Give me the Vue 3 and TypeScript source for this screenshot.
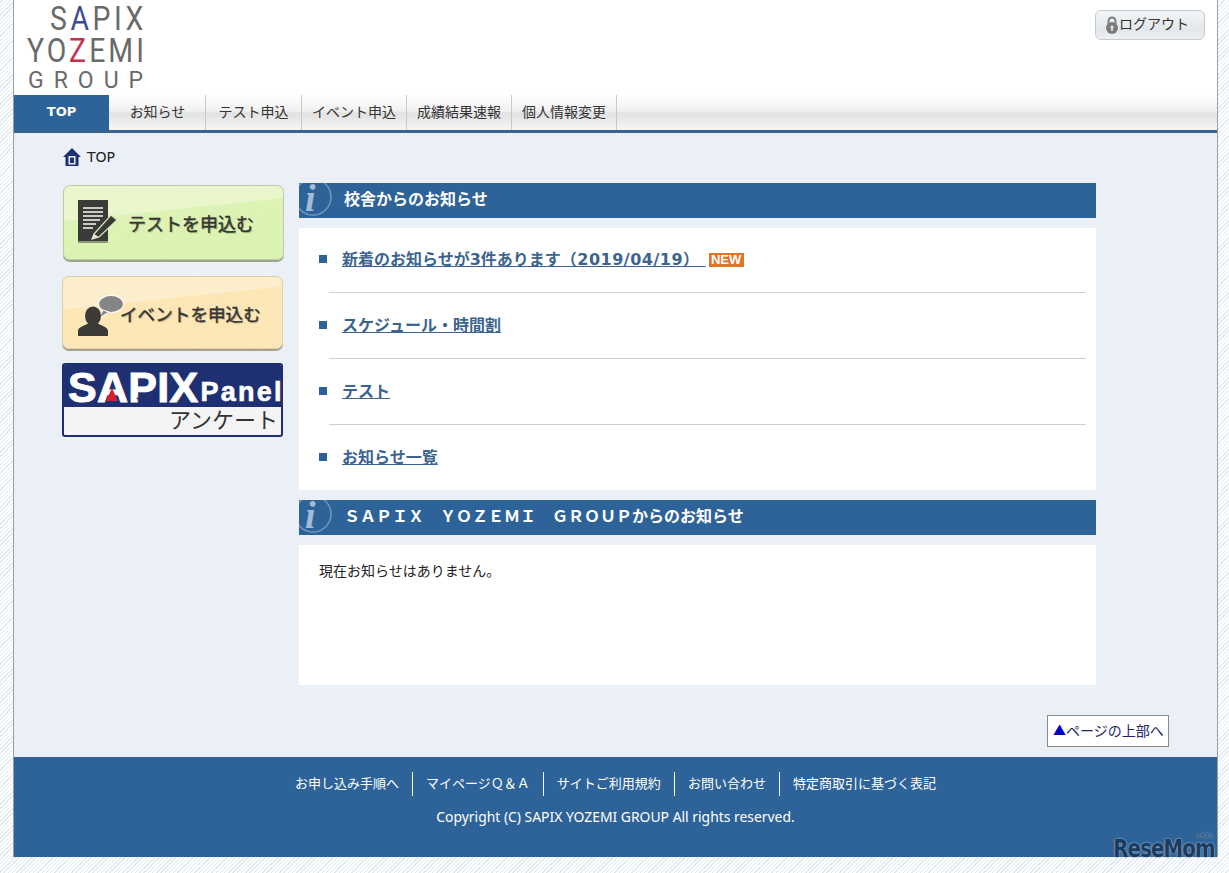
<script setup lang="ts">
const tabs: string[] = ['お知らせ', 'テスト申込', 'イベント申込', '成績結果速報', '個人情報変更']
const notices: { label: string; date?: string; isNew?: boolean }[] = [
  { label: '新着のお知らせが3件あります', date: '\uFF082019/04/19\uFF09 ', isNew: true },
  { label: 'スケジュール・時間割' },
  { label: 'テスト' },
  { label: 'お知らせ一覧' },
]
const footerLinks: string[] = ['お申し込み手順へ', 'マイページ\uFF31\uFF06\uFF21', 'サイトご利用規約', 'お問い合わせ', '特定商取引に基づく表記']
const groupTitle: string = '\uFF33\uFF21\uFF30\uFF29\uFF38\u3000\uFF39\uFF2F\uFF3A\uFF25\uFF2D\uFF29\u3000\uFF27\uFF32\uFF2F\uFF35\uFF30からのお知らせ'
</script>

<template>
  <div class="page">
    <header class="head">
      <div class="logo">
        <div class="l1">S<span class="blue">A</span>PIX</div>
        <div class="l2">YO<span class="red">Z</span>EMI</div>
        <div class="l3">GROUP</div>
      </div>
      <a class="logout">
        <svg width="14" height="18" viewBox="0 0 14 18">
          <path d="M3.5 8V5a3.5 3.5 0 0 1 7 0v3" fill="none" stroke="#7d7d7d" stroke-width="2" />
          <circle cx="7" cy="12" r="6" fill="#7d7d7d" />
          <circle cx="7" cy="11" r="1.5" fill="#e8ecef" />
          <rect x="6.2" y="11" width="1.6" height="4" fill="#e8ecef" />
        </svg>
        <span>ログアウト</span>
      </a>
    </header>

    <nav class="nav">
      <a class="tab-top">TOP</a>
      <a v-for="t in tabs" :key="t" class="tab">{{ t }}</a>
    </nav>

    <main class="content">
      <div class="crumb">
        <svg width="18" height="20" viewBox="0 0 18 20">
          <path d="M9 1 L18 10 H15.5 V19 H2.5 V10 H0 Z" fill="#1d3272" />
          <rect x="5.5" y="9" width="7" height="8.5" fill="#e9eef6" />
          <rect x="7" y="10.5" width="4" height="5.5" fill="#1d3272" />
        </svg>
        <span>TOP</span>
      </div>

      <div class="columns">
        <aside class="side">
          <a class="btn btn-green">
            <svg class="btn-icon" width="42" height="44" viewBox="0 0 42 44">
              <rect x="0" y="0" width="30" height="41" fill="#3a3a38" />
              <rect x="0" y="41" width="30" height="2" fill="#8a9a78" />
              <path d="M5 8H25M5 12H25M5 16H25M5 20H22M5 24H18M5 28H15" stroke="#c9c9c4" stroke-width="2" />
              <path d="M16 34 L33 15 L39 20 L21 37 L14 39 Z" fill="#3a3a38" stroke="#d9eab8" stroke-width="1.2" />
              <path d="M16 34 L14 39 L21 37 Z" fill="#e4e4dc" />
            </svg>
            <span class="btn-text">テストを申込む</span>
          </a>

          <a class="btn btn-orange">
            <svg class="btn-icon-2" width="46" height="42" viewBox="0 0 46 42">
              <ellipse cx="33" cy="9" rx="12.5" ry="8.5" fill="#858585" stroke="#fff" stroke-width="1.2" />
              <path d="M25 15 L21 23 L31 17 Z" fill="#858585" stroke="#fff" stroke-width="1" />
              <ellipse cx="15" cy="21" rx="8" ry="9.5" fill="#3b3a37" />
              <path d="M0 41 V36 C0 32 6 31 11 28 H19 C24 31 30 32 30 36 V41 Z" fill="#3b3a37" />
            </svg>
            <span class="btn-text narrow">イベントを申込む</span>
          </a>

          <a class="panel-banner">
            <div class="banner-top">
              <span class="sapix">SAPIX</span>
              <span class="panel-word">Panel</span>
              <i class="tri"></i>
              <span class="kana">サピックス</span>
            </div>
            <div class="banner-bottom">アンケート</div>
          </a>
        </aside>

        <section class="main">
          <h2 class="bar">
            <svg class="info" width="34" height="35" viewBox="0 0 34 35">
              <circle cx="14" cy="14" r="18" fill="none" stroke="#6f95bb" stroke-width="1.6" />
              <text x="6" y="28" class="info-i">i</text>
            </svg>
            <span>校舎からのお知らせ</span>
          </h2>
          <ul class="list">
            <li v-for="n in notices" :key="n.label" class="row">
              <i class="sq"></i>
              <a class="link">{{ n.label }}<span v-if="n.date" class="date">{{ n.date }}</span></a>
              <span v-if="n.isNew" class="new">NEW</span>
            </li>
          </ul>

          <h2 class="bar">
            <svg class="info" width="34" height="35" viewBox="0 0 34 35">
              <circle cx="14" cy="14" r="18" fill="none" stroke="#6f95bb" stroke-width="1.6" />
              <text x="6" y="28" class="info-i">i</text>
            </svg>
            <span>{{ groupTitle }}</span>
          </h2>
          <div class="empty">現在お知らせはありません。</div>
        </section>
      </div>

      <div class="to-top-wrap">
        <a class="to-top"><span class="tri-up">▲</span>ページの上部へ</a>
      </div>
    </main>

    <footer class="foot">
      <div class="foot-links">
        <a v-for="f in footerLinks" :key="f" class="foot-link">{{ f }}</a>
      </div>
      <p class="copy">Copyright (C) SAPIX YOZEMI GROUP All rights reserved.</p>
    </footer>

    <div class="mark"><span class="mark-kana">リセマム</span>ReseMom</div>
  </div>
</template>

<style>
html,
body {
  margin: 0;
  min-height: 100%;
  background: repeating-linear-gradient(-45deg, #ffffff 0 2px, #dfe9f2 2px 3px);
}
</style>

<style scoped>
.page {
  position: relative;
  box-sizing: border-box;
  width: 1205px;
  margin-left: 13px;
  margin-bottom: 16px;
  border-left: 1px solid #9a9fa6;
  border-right: 1px solid #9a9fa6;
  background: #fff;
  font-family: "DejaVu Sans", "Noto Sans CJK JP", sans-serif;
  color: #222;
}
.head {
  height: 95px;
  display: flex;
  justify-content: space-between;
  align-items: flex-start;
  padding-left: 13px;
  padding-right: 12px;
}
.logo {
  width: 120px;
  padding-top: 2px;
  font-family: "Roboto", "Liberation Sans", sans-serif;
  font-weight: 400;
  color: #6a6a6a;
  white-space: nowrap;
}
.l1 {
  font-size: 33px;
  line-height: 33px;
  letter-spacing: 4.2px;
  text-align: right;
  transform: scaleX(0.86);
  transform-origin: right center;
}
.l2 {
  font-size: 33px;
  line-height: 32px;
  letter-spacing: 3.6px;
  transform: scaleX(0.86);
  transform-origin: left center;
}
.l3 {
  font-size: 23px;
  line-height: 24px;
  letter-spacing: 10px;
  margin-top: 2px;
  margin-left: 1px;
}
.blue {
  color: #3b4d94;
}
.red {
  color: #c2334f;
}
.logout {
  box-sizing: border-box;
  width: 110px;
  height: 30px;
  margin-top: 10px;
  padding-left: 9px;
  padding-bottom: 1px;
  display: flex;
  align-items: center;
  gap: 0;
  border: 1px solid #c5cbd0;
  border-radius: 6px;
  background: linear-gradient(#f3f5f6, #e2e7eb 70%, #eef0f2);
  font-size: 14px;
  color: #333;
}
.logout span {
  margin-top: -4px;
}
.nav {
  height: 35px;
  display: flex;
  border-bottom: 3px solid #36638f;
  background: linear-gradient(#ffffff, #f0f0f0 46%, #e1e1e1 52%, #f6f6f6 100%);
}
.tab-top {
  width: 95px;
  margin-right: 1px;
  box-sizing: border-box;
  padding-bottom: 2px;
  display: flex;
  align-items: center;
  justify-content: center;
  background: #2e6399;
  color: #fff;
  font-weight: 700;
  font-size: 13px;
}
.tab {
  box-sizing: border-box;
  min-width: 96px;
  padding: 0 10px 4px;
  display: flex;
  align-items: center;
  justify-content: center;
  border-right: 1px solid #c9c9c9;
  font-size: 14px;
  color: #333;
  white-space: nowrap;
}
.content {
  background: #ebeff6;
  height: 624px;
  box-sizing: border-box;
  overflow: hidden;
}
.crumb {
  height: 50px;
  display: flex;
  align-items: center;
  gap: 6px;
  padding-left: 49px;
  font-size: 14px;
  color: #222;
  box-sizing: border-box;
  padding-bottom: 2px;
}
.columns {
  display: flex;
  gap: 15px;
  padding-left: 48px;
}
.side {
  width: 222px;
  flex: none;
  display: flex;
  flex-direction: column;
  padding-top: 2px;
}
.btn {
  box-sizing: border-box;
  width: 221px;
  height: 75px;
  display: flex;
  align-items: center;
  border-radius: 7px;
  position: relative;
  overflow: hidden;
}
.btn-green {
  margin-left: 1px;
  padding-left: 14px;
  gap: 8px;
  border: 1px solid #bccba6;
  box-shadow: 0 2px 0 #9aa58b;
  background:
    repeating-linear-gradient(-45deg, rgba(255, 255, 255, 0.14) 0 1px, rgba(255, 255, 255, 0) 1px 3px),
    linear-gradient(174deg, #e8f6c9 0 36%, #dbf2b2 37%, #d9f2ae 100%);
}
.btn-orange {
  height: 73px;
  margin-top: 16px;
  padding-left: 15px;
  gap: 0;
  border: 1px solid #dccfa9;
  box-shadow: 0 2px 0 #a9a18c;
  background:
    repeating-linear-gradient(-45deg, rgba(255, 255, 255, 0.14) 0 1px, rgba(255, 255, 255, 0) 1px 3px),
    linear-gradient(174deg, #fdeecb 0 34%, #fde5b3 35%, #fee6b4 100%);
}
.btn-icon {
  flex: none;
  margin-top: -2px;
}
.btn-icon-2 {
  flex: none;
  margin-top: 6px;
  margin-right: -4px;
}
.btn-text {
  font-family: "Noto Sans CJK JP", sans-serif;
  font-size: 18px;
  font-weight: 400;
  color: #333;
  -webkit-text-stroke: 0.4px #333;
  text-shadow: 1px 1px 1px rgba(70, 80, 40, 0.4);
  white-space: nowrap;
}
.narrow {
  font-size: 17.6px;
  margin-top: 2px;
}
.panel-banner {
  box-sizing: border-box;
  display: block;
  margin-top: 14px;
  width: 221px;
  height: 74px;
  border: 2px solid #1e2f72;
  border-radius: 3px;
  background: #f4f4f4;
  overflow: hidden;
}
.banner-top {
  position: relative;
  height: 42px;
  background: #1e2f72;
  color: #fff;
  font-family: "Liberation Sans", sans-serif;
  font-weight: 700;
  white-space: nowrap;
  display: flex;
  align-items: flex-end;
  padding-left: 4px;
}
.sapix {
  font-size: 43px;
  line-height: 39px;
  letter-spacing: 0.3px;
  -webkit-text-stroke: 1px #fff;
}
.panel-word {
  font-size: 27px;
  line-height: 29px;
  letter-spacing: 2.2px;
  margin-left: 2px;
  -webkit-text-stroke: 0.6px #fff;
}
.tri {
  position: absolute;
  left: 42px;
  bottom: 6px;
  width: 0;
  height: 0;
  border-left: 6px solid transparent;
  border-right: 6px solid transparent;
  border-bottom: 13px solid #d8212f;
}
.kana {
  position: absolute;
  left: 72px;
  bottom: 5px;
  font-size: 5px;
  line-height: 6px;
  letter-spacing: -1px;
  font-family: "Noto Sans CJK JP", sans-serif;
  color: #1e2f72;
}
.banner-bottom {
  height: 28px;
  line-height: 23px;
  text-align: right;
  padding-right: 3px;
  font-family: "Noto Sans CJK JP", sans-serif;
  font-size: 22px;
  font-weight: 400;
  color: #333;
}
.main {
  width: 797px;
  flex: none;
}
.bar {
  position: relative;
  box-sizing: border-box;
  height: 35px;
  margin: 0;
  padding-left: 45px;
  padding-bottom: 5px;
  display: flex;
  align-items: center;
  background: #2e6399;
  color: #fff;
  font-size: 16px;
  font-weight: 700;
  font-family: "Noto Sans CJK JP", sans-serif;
  white-space: nowrap;
  overflow: hidden;
}
.info {
  position: absolute;
  left: 0;
  top: 0;
}
.info-i {
  font-family: "Liberation Serif", serif;
  font-style: italic;
  font-weight: 700;
  font-size: 38px;
  fill: #a3bcd6;
}
.list {
  list-style: none;
  margin: 10px 0;
  padding: 0;
  background: #fff;
}
.row {
  position: relative;
  box-sizing: border-box;
  height: 66px;
  margin: 0 10px 0 30px;
  padding-left: 13px;
  padding-bottom: 4px;
  display: flex;
  align-items: center;
  border-bottom: 1px solid #cfcfcf;
  font-size: 16px;
  font-weight: 700;
}
.row:first-child {
  height: 65px;
}
.row:last-child {
  height: 65px;
  border-bottom: none;
}
.sq {
  position: absolute;
  left: -10px;
  top: 50%;
  width: 8px;
  height: 8px;
  margin-top: -5px;
  background: #2e6399;
}
.link {
  color: #3b6490;
  text-decoration: underline;
  white-space: pre;
}
.date {
  letter-spacing: 0.5px;
}
.new {
  margin-left: 3px;
  margin-top: 4px;
  box-sizing: border-box;
  width: 35px;
  height: 14px;
  background: #e07427;
  color: #fff;
  font-family: "Liberation Sans", sans-serif;
  font-size: 13px;
  line-height: 14px;
  text-align: center;
  font-weight: 700;
}
.empty {
  box-sizing: border-box;
  height: 140px;
  margin-top: 10px;
  padding: 15px 20px;
  background: #fff;
  font-size: 14px;
  line-height: 20px;
  color: #222;
  font-family: "Noto Sans CJK JP", sans-serif;
}
.to-top-wrap {
  display: flex;
  justify-content: flex-end;
  margin-top: 30px;
  padding-right: 48px;
}
.to-top {
  box-sizing: border-box;
  width: 122px;
  height: 32px;
  display: flex;
  align-items: center;
  padding-left: 5px;
  padding-bottom: 3px;
  border: 1px solid #8b8b8b;
  background: #fff;
  color: #24246a;
  font-size: 14px;
  font-family: "Noto Sans CJK JP", sans-serif;
  white-space: nowrap;
}
.tri-up {
  color: #0000c8;
  font-size: 13px;
}
.foot {
  box-sizing: border-box;
  height: 100px;
  padding-top: 15px;
  background: #2e6399;
  color: #fff;
  text-align: center;
}
.foot-links {
  display: flex;
  justify-content: center;
}
.foot-link {
  padding: 0 13px;
  height: 24px;
  line-height: 21px;
  font-size: 13px;
  border-right: 1px solid #fff;
  font-family: "Noto Sans CJK JP", sans-serif;
  white-space: nowrap;
}
.foot-link:last-child {
  border-right: none;
}
.copy {
  margin: 12px 0 0;
  font-size: 13.9px;
  line-height: 18px;
  font-family: "Noto Sans", "DejaVu Sans", sans-serif;
}
.mark {
  position: absolute;
  right: 2px;
  bottom: -5px;
  font-family: "DejaVu Sans", sans-serif;
  font-weight: 700;
  font-size: 24px;
  line-height: 26px;
  letter-spacing: -1px;
  transform: scaleX(0.82);
  transform-origin: right bottom;
  color: #1c3a5c;
  text-shadow: 0 0 2px #8fb2cf, 0 0 2px #8fb2cf;
}
.mark-kana {
  position: absolute;
  right: 2px;
  top: -4px;
  font-size: 5px;
  line-height: 6px;
  letter-spacing: 0;
  font-family: "Noto Sans CJK JP", sans-serif;
}
</style>
